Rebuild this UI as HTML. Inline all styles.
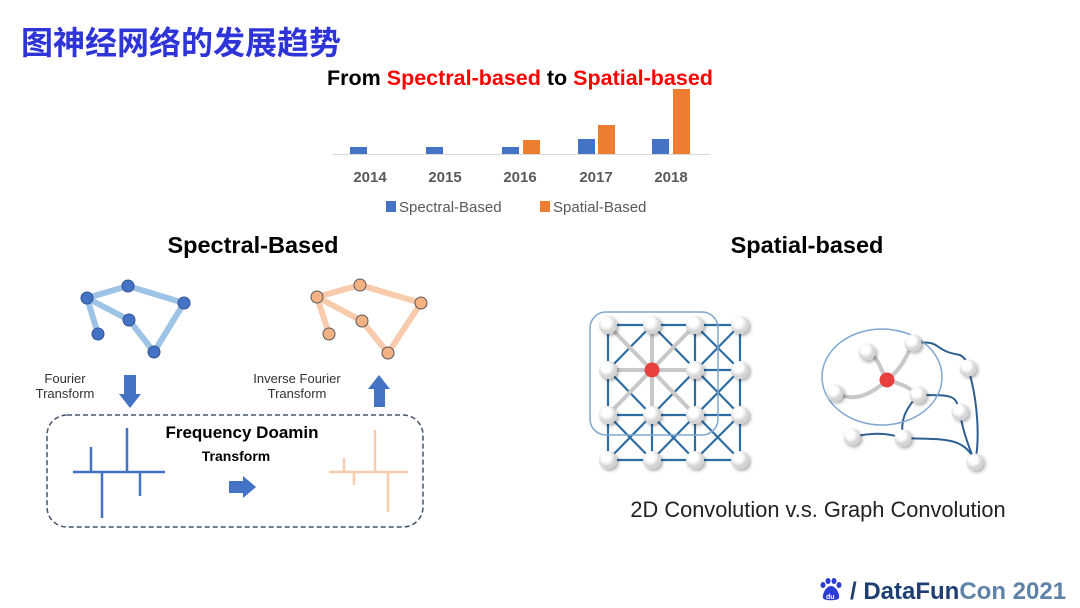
<!DOCTYPE html>
<html><head><meta charset="utf-8"><style>
body{margin:0;width:1080px;height:608px;background:#fff;overflow:hidden;position:relative;font-family:"Liberation Sans","Noto Sans CJK SC",sans-serif}
.t{position:absolute;white-space:nowrap}
</style></head><body>
<div class="t" style="left:21px;top:21px;font-size:32px;font-weight:bold;color:#2f34d8;font-family:'Noto Sans CJK SC',sans-serif;line-height:40px">图神经网络的发展趋势</div>
<div class="t" style="left:327px;top:65px;font-size:21.5px;font-weight:bold;color:#000;line-height:27px">From <span style="color:#f00">Spectral-based</span> to <span style="color:#f00">Spatial-based</span></div>
<svg width="1080" height="608" style="position:absolute;left:0;top:0">
<line x1="333" y1="154.5" x2="710" y2="154.5" stroke="#d9d9d9" stroke-width="1"/>
<g fill="#4472c4">
<rect x="350" y="147" width="17" height="7"/><rect x="426" y="147" width="17" height="7"/><rect x="502" y="147" width="17" height="7"/>
<rect x="578" y="139" width="17" height="15"/><rect x="652" y="139" width="17" height="15"/>
<rect x="386" y="201" width="10" height="11"/></g>
<g fill="#ed7d31">
<rect x="523" y="140" width="17" height="14"/><rect x="598" y="125" width="17" height="29"/><rect x="673" y="89" width="17" height="65"/>
<rect x="540" y="201" width="10" height="11"/></g>
<g font-family="Liberation Sans" font-size="15" font-weight="bold" fill="#595959" text-anchor="middle">
<text x="370" y="182">2014</text><text x="445" y="182">2015</text><text x="520" y="182">2016</text><text x="596" y="182">2017</text><text x="671" y="182">2018</text></g>
<g font-family="Liberation Sans" font-size="15" fill="#595959"><text x="399" y="212">Spectral-Based</text><text x="553" y="212">Spatial-Based</text></g>
<g font-family="Liberation Sans" font-size="23.5" font-weight="bold" fill="#000" text-anchor="middle">
<text x="253" y="253">Spectral-Based</text><text x="807" y="253">Spatial-based</text></g>
<g stroke="#9dc3e6" stroke-width="6" fill="none" stroke-linecap="round">
<polyline points="98,334 87,298 128,286 184,303 154,352 129,320 87,298"/></g>
<g fill="#4472c4" stroke="#2f5597" stroke-width="1">
<circle cx="87" cy="298" r="6"/><circle cx="128" cy="286" r="6"/><circle cx="184" cy="303" r="6"/><circle cx="129" cy="320" r="6"/><circle cx="98" cy="334" r="6"/><circle cx="154" cy="352" r="6"/></g>
<g stroke="#f8cbad" stroke-width="6" fill="none" stroke-linecap="round">
<polyline points="329,334 317,297 360,285 421,303 388,353 362,321 317,297"/></g>
<g fill="#f4b183" stroke="#595959" stroke-width="1">
<circle cx="317" cy="297" r="6"/><circle cx="360" cy="285" r="6"/><circle cx="421" cy="303" r="6"/><circle cx="362" cy="321" r="6"/><circle cx="329" cy="334" r="6"/><circle cx="388" cy="353" r="6"/></g>
<g font-family="Liberation Sans" font-size="13" fill="#333" text-anchor="middle">
<text x="65" y="383">Fourier</text><text x="65" y="398">Transform</text>
<text x="297" y="383">Inverse Fourier</text><text x="297" y="398">Transform</text></g>
<polygon points="124,375 136,375 136,394 141,394 130,408 119,394 124,394" fill="#4472c4"/>
<polygon points="374,407 385,407 385,389 390,389 379,375 368,389 374,389" fill="#4472c4"/>
<rect x="47" y="415" width="376" height="112" rx="20" fill="none" stroke="#44546a" stroke-width="1.5" stroke-dasharray="5,3"/>
<text x="242" y="438" font-family="Liberation Sans" font-size="17" font-weight="bold" text-anchor="middle">Frequency Doamin</text>
<text x="236" y="461" font-family="Liberation Sans" font-size="14" font-weight="bold" text-anchor="middle">Transform</text>
<g stroke="#4472c4" stroke-width="2.5"><line x1="73" y1="472" x2="165" y2="472"/><line x1="91" y1="447" x2="91" y2="472"/><line x1="127" y1="428" x2="127" y2="472"/><line x1="102" y1="472" x2="102" y2="518"/><line x1="140" y1="472" x2="140" y2="496"/></g>
<polygon points="229,481 243,481 243,476 256,487 243,498 243,493 229,493" fill="#4472c4"/>
<g stroke="#f8cbad" stroke-width="2.5"><line x1="329" y1="472" x2="408" y2="472"/><line x1="344" y1="458" x2="344" y2="472"/><line x1="375" y1="430" x2="375" y2="472"/><line x1="354" y1="472" x2="354" y2="485"/><line x1="388" y1="472" x2="388" y2="512"/></g>
<defs><radialGradient id="g" cx="0.4" cy="0.35"><stop offset="0.5" stop-color="#fff"/><stop offset="1" stop-color="#d4d4d4"/></radialGradient>
<filter id="s"><feDropShadow dx="2" dy="2" stdDeviation="1.5" flood-color="#000" flood-opacity="0.3"/></filter></defs>
<g stroke="#2e6da4" stroke-width="2.2" fill="none">
<path d="M608 325H740M608 370H740M608 415H740M608 460H740M608 325V460M652 325V460M695 325V460M740 325V460"/>
<path d="M608 370L652 325M608 415L695 325M608 460L740 325M652 460L740 370M695 460L740 415M608 370L695 460M608 325L740 460M652 325L740 415M695 325L740 370M608 415L652 460"/></g>
<g stroke="#c8c8c8" stroke-width="4"><path d="M608 325L695 415M695 325L608 415M652 325V415M608 370H695"/></g>
<rect x="590" y="312" width="128" height="123" rx="16" fill="none" stroke="#7fa7cf" stroke-width="1.5"/>
<g fill="url(#g)" filter="url(#s)">
<circle cx="608" cy="325" r="9"/><circle cx="652" cy="325" r="9"/><circle cx="695" cy="325" r="9"/><circle cx="740" cy="325" r="9"/>
<circle cx="608" cy="370" r="9"/><circle cx="695" cy="370" r="9"/><circle cx="740" cy="370" r="9"/>
<circle cx="608" cy="415" r="9"/><circle cx="652" cy="415" r="9"/><circle cx="695" cy="415" r="9"/><circle cx="740" cy="415" r="9"/>
<circle cx="608" cy="460" r="9"/><circle cx="652" cy="460" r="9"/><circle cx="695" cy="460" r="9"/><circle cx="740" cy="460" r="9"/></g>
<circle cx="652" cy="370" r="7.5" fill="#e8403f"/>
<g stroke="#2e5f8f" stroke-width="2" fill="none">
<path d="M913 343C945 340 930 350 960 355C968 360 968 365 968 368"/>
<path d="M968 368C978 400 980 440 975 462"/>
<path d="M918 395C955 395 955 395 960 412C962 430 970 450 975 462"/>
<path d="M918 395C905 410 900 420 903 438"/>
<path d="M852 437C870 433 885 432 903 438"/>
<path d="M903 438C940 440 965 435 975 462"/></g>
<g stroke="#c8c8c8" stroke-width="4" fill="none">
<path d="M867 352C880 358 880 370 887 380"/><path d="M913 343C905 360 900 370 887 380"/>
<path d="M835 393C850 400 865 400 887 380"/><path d="M887 380C905 385 910 388 918 395"/></g>
<ellipse cx="882" cy="377" rx="60" ry="48" fill="none" stroke="#7fa7cf" stroke-width="1.5"/>
<g fill="url(#g)" filter="url(#s)">
<circle cx="867" cy="352" r="8.5"/><circle cx="913" cy="343" r="8.5"/><circle cx="835" cy="393" r="8.5"/><circle cx="918" cy="395" r="8.5"/><circle cx="968" cy="368" r="8.5"/><circle cx="960" cy="412" r="8.5"/><circle cx="852" cy="437" r="8.5"/><circle cx="903" cy="438" r="8.5"/><circle cx="975" cy="462" r="8.5"/></g>
<circle cx="887" cy="380" r="7.5" fill="#e8403f"/>
<text x="818" y="517" font-family="Liberation Sans" font-size="21.8" fill="#222" text-anchor="middle">2D Convolution v.s. Graph Convolution</text>
<g fill="#2b3bd6"><ellipse cx="823" cy="585" rx="2.5" ry="3"/><ellipse cx="828" cy="581" rx="2.5" ry="3"/><ellipse cx="834" cy="581" rx="2.5" ry="3"/><ellipse cx="839" cy="585" rx="2.5" ry="3"/>
<path d="M831 586C826 586 822 594 823 598C824 601 838 601 839 598C840 594 836 586 831 586Z"/></g>
<text x="826" y="599" font-family="Liberation Sans" font-size="7" font-weight="bold" fill="#fff">du</text>
<text x="850" y="599" font-family="Liberation Sans" font-size="24" font-weight="bold" fill="#1f3f73">/ DataFun<tspan fill="#5f82a8">Con 2021</tspan></text>
</svg>
</body></html>
